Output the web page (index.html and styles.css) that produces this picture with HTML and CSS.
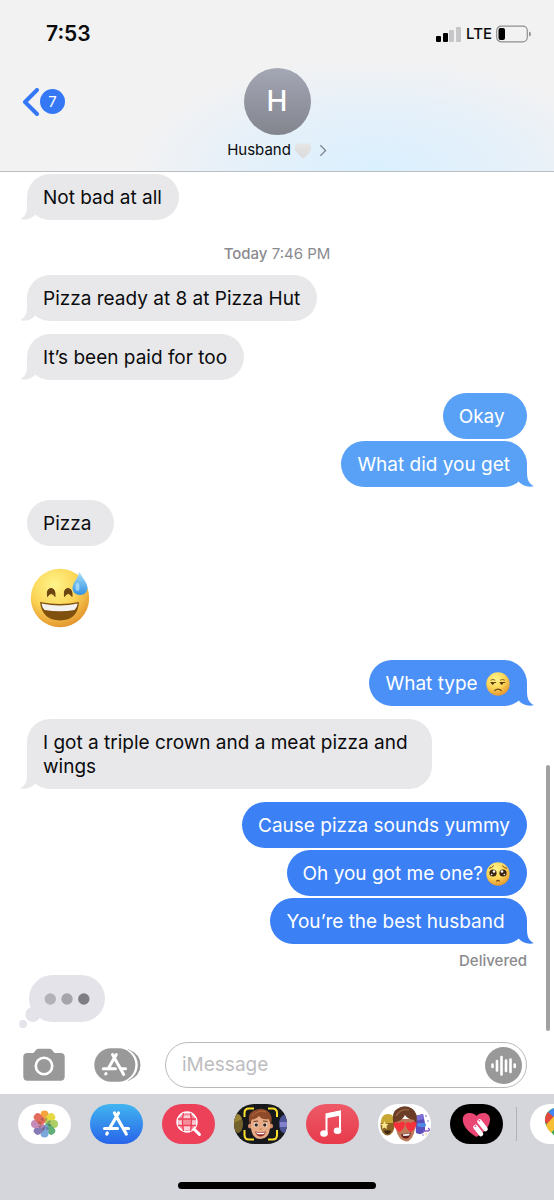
FILE: index.html
```html
<!DOCTYPE html>
<html lang="en">
<head>
    <meta charset="utf-8">
    <meta name="viewport" content="width=device-width, initial-scale=1">
    <title>Messages</title>
    <link rel="stylesheet" href="styles.css">
</head>
<body>
    <header class="header">
        <div class="status">
            <span class="time">7:53</span>
            <div class="signal">
                <svg width="26" height="16" viewBox="0 0 26 16" aria-label="Signal">
                    <rect x="0" y="10" width="5" height="6" rx="1"/>
                    <rect x="7" y="7" width="5" height="9" rx="1"/>
                    <rect x="13" y="4" width="5" height="12" rx="1" fill="#c6c6c8"/>
                    <rect x="20" y="1" width="5" height="15" rx="1" fill="#c6c6c8"/>
                </svg>
                <span class="network">LTE</span>
                <svg width="35" height="18" viewBox="0 0 35 18" aria-label="Battery">
                    <rect x="0.7" y="1.2" width="30.6" height="15.6" rx="4.5" fill="none" stroke="#8f8f92" stroke-width="1.2"/>
                    <rect x="2.5" y="3" width="6.5" height="12" rx="2"/>
                    <path d="M33 6.5 Q35 7 35 9 T33 11.5Z" fill="#8f8f92"/>
                </svg>
            </div>
        </div>
        <div class="contactBar">
            <button class="back" aria-label="Back, 7 unread">
                <svg width="17" height="28" viewBox="0 0 17 28">
                    <path d="M15 2 L3 14 L15 26" fill="none" stroke="#3478f6" stroke-width="4" stroke-linecap="round" stroke-linejoin="round"/>
                </svg>
                <span class="count">7</span>
            </button>
            <button class="contact">
                <span class="avatar">H</span>
                <span class="name">Husband
                    <svg width="18" height="17" viewBox="0 0 18 17">
                        <path d="M9 16.2 C4.5 13 .8 9.8 .8 5.6 C.8 2.8 2.7 1 5 1 C6.8 1 8.2 1.8 9 3 C9.8 1.8 11.2 1 13 1 C15.3 1 17.2 2.8 17.2 5.6 C17.2 9.8 13.5 13 9 16.2Z" fill="url(#heartFill)"/>
                    </svg>
                    <svg class="more" width="8" height="13" viewBox="0 0 8 13">
                        <path d="M1.3 1.2 L6.6 6.5 L1.3 11.8" fill="none" stroke="#7f868e" stroke-width="1.3"/>
                    </svg>
                </span>
            </button>
        </div>
    </header>

    <!-- Conversation -->
    <main class="chat">
        <div class="bubble in tail">Not bad at all</div>
        <p class="stamp"><b>Today</b> 7:46 PM</p>
        <div class="bubble in tail first">Pizza ready at 8 at Pizza Hut</div>
        <div class="bubble in tail">It’s been paid for too</div>
        <div class="bubble out light">Okay&nbsp;</div>
        <div class="bubble out light tail joined">What did you get</div>
        <div class="bubble in">Pizza&nbsp;</div>
        <div class="bigEmoji">
            <svg width="60" height="60" viewBox="0 0 60 60" role="img" aria-label="Grinning face with sweat">
                <circle cx="30" cy="30" r="29.2" fill="url(#face)"/>
                <path d="M17.5 28.5 Q16.5 20.5 21 20.5 Q25.5 20.5 25 28.5 Q21.2 22.5 17.5 28.5Z" fill="#6b4410" stroke="#6b4410" stroke-linejoin="round"/>
                <path d="M34.5 28.5 Q33.5 20.5 38 20.5 Q42.5 20.5 42 28.5 Q38.2 22.5 34.5 28.5Z" fill="#6b4410" stroke="#6b4410" stroke-linejoin="round"/>
                <path d="M10 34 Q30 38 49 34 Q48 52 30 52.5 Q12 52 10 34Z" fill="#80500f"/>
                <path d="M11.5 35.5 Q30 39.5 47.7 35.5 Q47 40 44.5 42 Q30 44.5 14.5 42 Q12 40 11.5 35.5Z" fill="#f3f2ef"/>
                <path d="M49.5 4 C53 11 57.5 15 57.5 20 C57.5 24.2 54 27 50 27 C45.5 27 42.5 24 42.5 20 C42.5 15 47.5 11 49.5 4Z" fill="url(#drop)"/>
                <ellipse cx="47.5" cy="19" rx="2" ry="4" fill="#c9efff" opacity=".6"/>
            </svg>
        </div>
        <div class="bubble out mid tail late">What type
            <svg class="emoji" width="24" height="24" viewBox="0 0 24 24" role="img" aria-label="Unamused face">
                <circle cx="12" cy="12" r="11.7" fill="url(#face)"/>
                <g fill="none" stroke="#6b4410" stroke-width="1.2" stroke-linecap="round">
                    <path d="M5 10.5 H9.8 M14 10.5 H18.8"/>
                    <path d="M5 8 Q7 6.8 9 8 M14.5 8 Q16.5 6.8 18.5 8" stroke-width=".8"/>
                    <path d="M8.8 18.5 Q12 15.8 15.2 18.5"/>
                </g>
                <path d="M5 10.8 H8.3 Q8 12.8 6.6 12.8 Q5.2 12.5 5 10.8Z M14 10.8 H17.3 Q17 12.8 15.6 12.8 Q14.2 12.5 14 10.8Z" fill="#4f3212"/>
            </svg>
        </div>
        <div class="bubble in tail">I got a triple crown and a meat pizza and wings</div>
        <div class="bubble out">Cause pizza sounds yummy</div>
        <div class="bubble out joined">Oh you got me one?<svg class="emoji" width="24" height="24" viewBox="0 0 24 24" role="img" aria-label="Pleading face">
                <circle cx="12" cy="12" r="11.7" fill="url(#face)"/>
                <circle cx="7" cy="11" r="3.6" fill="#3a2515"/>
                <circle cx="17" cy="11" r="3.6" fill="#3a2515"/>
                <g fill="#fff">
                    <circle cx="8" cy="9.5" r="1.3"/>
                    <circle cx="16" cy="9.5" r="1.3"/>
                    <circle cx="5.7" cy="12.5" r=".8"/>
                    <circle cx="18.3" cy="12.5" r=".8"/>
                </g>
                <g fill="none" stroke="#7a4a10" stroke-linecap="round">
                    <path d="M3.5 6.3 Q6 5.8 7.5 4 M20.5 6.3 Q18 5.8 16.5 4"/>
                    <path d="M10.7 19 Q12 17.7 13.3 19" stroke-width="1.3"/>
                </g>
            </svg></div>
        <div class="bubble out tail joined">You’re the best husband&nbsp;</div>
        <p class="delivered">Delivered</p>
        <svg class="typing" width="87" height="54" viewBox="0 0 87 54" role="img" aria-label="Typing">
            <g fill="#e4e3e9">
                <rect x="10" y="0" width="76" height="47" rx="23.5"/>
                <circle cx="14" cy="39.5" r="7.6"/>
                <circle cx="4" cy="49" r="4"/>
            </g>
            <circle cx="31.3" cy="24" r="5.7" fill="#b3b2b8"/>
            <circle cx="48" cy="24" r="5.7" fill="#a5a4aa"/>
            <circle cx="64.8" cy="24" r="5.7" fill="#7e7d83"/>
        </svg>
        <div class="scrollThumb"></div>
    </main>

    <form class="composer">
        <button type="button" aria-label="Camera">
            <svg width="42" height="34" viewBox="0 0 42 34">
                <path d="M4.5 5 H10.5 L13 2 Q14 .8 15.5 .8 H26.5 Q28 .8 29 2 L31.5 5 H37.5 Q41.7 5 41.7 9 V28.5 Q41.7 32.7 37.5 32.7 H4.5 Q.3 32.7 .3 28.5 V9 Q.3 5 4.5 5Z" fill="#999"/>
                <circle cx="21" cy="18" r="8.2" fill="none" stroke="#fff" stroke-width="2.6"/>
            </svg>
        </button>
        <button type="button" aria-label="Apps">
            <svg width="47" height="34" viewBox="0 0 47 34">
                <path d="M34 1 Q46.5 6 46.5 17 T34 33Z" fill="#999"/>
                <rect x=".3" y="0" width="43.5" height="34" rx="17" fill="#fff"/>
                <rect x=".3" y=".3" width="41" height="33.4" rx="16.7" fill="#999"/>
                <path d="M18.5 6.5 L29.7 26.5 M22.3 6.5 L14 21 M9.3 20.8 H21.5 M27 20.8 H31.5 M12 25.5 L11.7 26" fill="none" stroke="#fff" stroke-width="3" stroke-linecap="round"/>
            </svg>
        </button>
        <div class="field">
            <input type="text" placeholder="iMessage" aria-label="iMessage">
            <button type="button" aria-label="Record audio">
                <svg width="37" height="37" viewBox="0 0 37 37">
                    <circle cx="18.5" cy="18.5" r="18.5" fill="#999"/>
                    <path d="M7.5 17.5 V20 M12 14 V23.5 M16.5 10 V27.5 M21 13.5 V24 M25.5 12.5 V25 M29.7 17.5 V20" stroke="#fff" stroke-width="2.6" stroke-linecap="round"/>
                </svg>
            </button>
        </div>
    </form>

    <footer class="tray">
        <nav class="apps">
            <button aria-label="Photos">
                <svg viewBox="0 0 53 40">
                    <rect width="53" height="40" fill="#fff"/>
                    <g opacity=".9">
                        <rect x="22.5" y="6.5" width="8" height="13" rx="4" fill="#f39a2b"/>
                        <rect x="22.5" y="6.5" width="8" height="13" rx="4" fill="#e3d530" transform="rotate(45 26.5 20)"/>
                        <rect x="22.5" y="6.5" width="8" height="13" rx="4" fill="#a5cb55" transform="rotate(90 26.5 20)"/>
                        <rect x="22.5" y="6.5" width="8" height="13" rx="4" fill="#4fa66a" transform="rotate(135 26.5 20)"/>
                        <rect x="22.5" y="6.5" width="8" height="13" rx="4" fill="#6c9fd6" transform="rotate(180 26.5 20)"/>
                        <rect x="22.5" y="6.5" width="8" height="13" rx="4" fill="#7b6bae" transform="rotate(225 26.5 20)"/>
                        <rect x="22.5" y="6.5" width="8" height="13" rx="4" fill="#c07fae" transform="rotate(270 26.5 20)"/>
                        <rect x="22.5" y="6.5" width="8" height="13" rx="4" fill="#e25c4d" transform="rotate(315 26.5 20)"/>
                    </g>
                    <circle cx="26.5" cy="20" r="5" fill="none" stroke="#4a4238" stroke-width="3" stroke-dasharray="2 1.93" opacity=".35"/>
                    <circle cx="26.5" cy="20" r="1" fill="#fff"/>
                </svg>
            </button>
            <button aria-label="App Store">
                <svg viewBox="0 0 53 40">
                    <rect width="53" height="40" fill="url(#store)"/>
                    <path d="M24.5 9 L36.3 30 M28.5 9 L19.5 24.5 M14.5 24.5 H27.5 M33.5 24.5 H38.5 M17.3 29 L16.8 30" fill="none" stroke="#fff" stroke-width="3.2" stroke-linecap="round"/>
                </svg>
            </button>
            <button aria-label="Images">
                <svg viewBox="0 0 53 40">
                    <rect width="53" height="40" fill="#ed4059"/>
                    <circle cx="25" cy="18" r="9.8" fill="#f58c9a" stroke="#fff" stroke-width="1.8"/>
                    <path d="M21 11.5 H28 V15 H21Z M16.5 16.5 H21 V21 H16.5Z M29 16.5 H33.5 V21 H29Z M22 22 H28 V26 H22Z" fill="#fcd0d6"/>
                    <path d="M21.5 9 Q19.5 18 21.5 27 M28.5 9 Q30.5 18 28.5 27 M16 15 H34 M16 21.5 H34" fill="none" stroke="#ed4059" stroke-width="1.3"/>
                    <path d="M32.5 25.5 L37.5 30.5" stroke="#fff" stroke-width="3" stroke-linecap="round"/>
                </svg>
            </button>
            <button aria-label="Memoji">
                <svg viewBox="0 0 53 40">
                    <rect width="53" height="40" fill="#17181b"/>
                    <ellipse cx="4" cy="20" rx="5" ry="9" fill="#75612b"/>
                    <path d="M0 12 Q5 7 8 15 L0 19Z" fill="#988337"/>
                    <ellipse cx="50" cy="20" rx="5" ry="9" fill="#4d5496"/>
                    <rect x="46" y="18" width="7" height="5" fill="#8380cc"/>
                    <path d="M10.5 13 V9 Q10.5 4.5 15 4.5 H20 M34 4.5 H38.5 Q43 4.5 43 9 V13 M43 26 V31 Q43 35.5 38.5 35.5 H34 M20 35.5 H15 Q10.5 35.5 10.5 31 V26" fill="none" stroke="#f9e12d" stroke-width="2"/>
                    <circle cx="16.5" cy="22" r="2.5" fill="#d58f6b"/>
                    <circle cx="36.5" cy="22" r="2.5" fill="#d58f6b"/>
                    <path d="M17 17 Q17 10 26.5 10 T36 17 V24 Q35 35 26.5 35 T17 24Z" fill="#e7ab86"/>
                    <path d="M15.5 20 Q13 9 20 6.5 Q27 3 33 6.5 Q39.5 11 37 20 L34.5 15 Q28 16 25 12 Q22 15.5 18 15.5Z" fill="#8e4a2a"/>
                    <path d="M18 12 Q25 5 32 8" stroke="#b86b3f" fill="none"/>
                    <circle cx="22" cy="21" r="2.2" fill="#fff"/>
                    <circle cx="31" cy="21" r="2.2" fill="#fff"/>
                    <circle cx="22.2" cy="21" r="1.7" fill="#35231a"/>
                    <circle cx="30.8" cy="21" r="1.7" fill="#35231a"/>
                    <path d="M19.5 17.5 L24 17 M29 17 L33.5 17.5" stroke="#63331f"/>
                    <path d="M25.5 25 H28" stroke="#bd7758"/>
                    <path d="M21 27.5 Q26.5 29 32 27.5 Q30.5 32.5 26.5 32.5 T21 27.5Z" fill="#8b2a25"/>
                    <path d="M22 28.2 Q26.5 29.3 31 28.2 L30 30 Q26.5 30.7 23 30Z" fill="#fff"/>
                </svg>
            </button>
            <button aria-label="Music">
                <svg viewBox="0 0 53 40">
                    <rect width="53" height="40" fill="url(#music)"/>
                    <path d="M20.5 29 V10.2 L34 7.5 V26" fill="none" stroke="#fff" stroke-width="2"/>
                    <path d="M20.5 9.5 L35 6.8 V11.5 L20.5 14.3Z" fill="#fff"/>
                    <ellipse cx="18" cy="29.5" rx="3.8" ry="3.2" fill="#fff"/>
                    <ellipse cx="31.5" cy="26.8" rx="3.8" ry="3.2" fill="#fff"/>
                </svg>
            </button>
            <button aria-label="Memoji stickers">
                <svg viewBox="0 0 53 40">
                    <rect width="53" height="40" fill="#fff"/>
                    <ellipse cx="9.5" cy="21.5" rx="7" ry="10" fill="#8a6424"/>
                    <path d="M2.8 19 Q3 10 10 10 T17 19Z" fill="#c9a735"/>
                    <path d="M6.5 17 L7.7 19.7 L10.5 20 L8.5 22 L9 25 L6.5 23.5 L4 25 L4.5 22 L2.5 20 L5.3 19.7Z" fill="#fbe88e"/>
                    <path d="M6 26.5 H13 Q12 30 9.5 30 T6 26.5Z" fill="#3f2513"/>
                    <path d="M37 12 L45 10 L47 19 V27 Q44 32 38 29Z" fill="#5a4ebc"/>
                    <path d="M37 12 L45 10 L46 15 L37 17Z" fill="#7a70d7"/>
                    <rect x="39" y="19" width="9" height="4" rx="2" fill="#4f8ae0"/>
                    <path d="M45 27 H50 Q53 26 50 24" fill="none" stroke="#8b5cc9" stroke-width="1.5"/>
                    <g fill="#6554c8">
                        <circle cx="48" cy="12" r=".8"/>
                        <circle cx="50" cy="17" r=".7"/>
                        <circle cx="45" cy="31" r=".7"/>
                    </g>
                    <circle cx="48" cy="30" r=".8" fill="#f0b13a"/>
                    <path d="M18 15 H37 V25 Q35 37 28 37.5 Q20 36 18 25Z" fill="#bd7a5b"/>
                    <path d="M15.5 20 Q13 8 19 5 Q26 0 34 4.5 Q41 9 38 21 L36 16 Q29 15 27 11 Q24 17 17.5 18Z" fill="#6b3d27"/>
                    <path d="M18 12 Q23 4 31 6" fill="none" stroke="#93603f" stroke-width="1.5"/>
                    <path d="M22 28 C18 26 15 22 15.5 19.5 Q17.5 16.5 21 19.2 Q24.5 15.8 27 19 Q27.5 23.5 22 28Z" fill="#f5323b"/>
                    <path d="M33 28 C29 26 27 22 27.5 19.5 Q30 16.5 32.5 19.2 Q36 15.8 38.5 19 Q39 23.5 33 28Z" fill="#f5323b"/>
                    <path d="M23 30 Q28 30 33 28.5 Q32 34.5 28 34.5 T23 30Z" fill="#641d1c"/>
                    <path d="M24.5 30.5 L32 29.5 L31 31.5 L25.5 32Z" fill="#fff"/>
                </svg>
            </button>
            <button aria-label="Digital Touch">
                <svg viewBox="0 0 53 40">
                    <rect width="53" height="40"/>
                    <path d="M26.5 33 C18 28 12.8 22 12.8 15.5 C12.8 11.5 15.5 9 19.5 9 C22.5 9 25 10 26.5 12 C28 10 30.5 9 33.5 9 C37.5 9 40 11.5 40 15.5 C40 22 35 28 26.5 33Z" fill="#e94674"/>
                    <path d="M25.5 23 L31 30 M29.5 17.5 L35.5 25" stroke="#fff" stroke-width="4.6" stroke-linecap="round"/>
                    <path d="M24.6 22.8 L26 21.7 M28.7 17.3 L30 16.3" stroke="#e94674" stroke-width="1.2"/>
                </svg>
            </button>
            <span class="divider"></span>
            <button aria-label="Google Maps">
                <svg viewBox="0 0 53 40">
                    <rect width="53" height="40" fill="#fff"/>
                    <path d="M15 17 C15 9 20 4 27 4 C34 4 39 9 39 17 C39 25 30 28 27 37 C24 28 15 25 15 17Z" fill="#34a853"/>
                    <path d="M18 9 Q21 4 27 4 Q33 4 36 9 L25 16Z" fill="#4285f4"/>
                    <path d="M15 18 Q14.5 12 18 8 L25 14 L18 21Z" fill="#e2473c"/>
                    <path d="M16 21 L24 12 L31 18 L21 29 Q17 25 16 21Z" fill="#f7bf35"/>
                </svg>
            </button>
        </nav>
        <div class="homeBar"></div>
    </footer>

    <!-- Shared gradients -->
    <svg class="defs" width="0" height="0" aria-hidden="true">
        <defs>
            <radialGradient id="face" cx=".4" cy=".28" r=".75">
                <stop offset="0" stop-color="#fff58b"/>
                <stop offset=".55" stop-color="#fbd455"/>
                <stop offset="1" stop-color="#e3932d"/>
            </radialGradient>
            <linearGradient id="drop" x2="0" y2="1">
                <stop offset="0" stop-color="#a8def8"/>
                <stop offset="1" stop-color="#3293e4"/>
            </linearGradient>
            <linearGradient id="heartFill" x2="0" y2="1">
                <stop offset="0" stop-color="#e6e6e6"/>
                <stop offset="1" stop-color="#dadadb"/>
            </linearGradient>
            <linearGradient id="store" x2="0" y2="1">
                <stop offset="0" stop-color="#41b5f0"/>
                <stop offset="1" stop-color="#2864e9"/>
            </linearGradient>
            <linearGradient id="music" x2="0" y2="1">
                <stop offset="0" stop-color="#ee5a69"/>
                <stop offset="1" stop-color="#e73a4a"/>
            </linearGradient>
        </defs>
    </svg>
</body>
</html>
```
FILE: styles.css
```css
* {
    box-sizing: border-box;
}

body {
    margin: 0;
    min-height: 100vh;
    display: flex;
    flex-direction: column;
    background-color: white;
    color: #0b0b0d;
    font: 19px/24px Inter, "Liberation Sans", sans-serif;
    overflow-x: hidden;
}

button {
    padding: 0;
    border: 0;
    background: none;
    color: inherit;
    font: inherit;
    cursor: pointer;
}

svg {
    display: block;
    flex: none;
}

p {
    margin: 0;
}

/* Header */

.header {
    padding-bottom: 11px;
    border-bottom: 1px solid #b9bec3;
    background: radial-gradient(ellipse 44% 65% at 68% 100%, #daf0fe 0%, #e4f0fa 50%, rgba(242, 242, 243, 0) 100%), #f2f2f3;
}

.status {
    height: 68px;
    padding: 0 23px 0 46px;
    display: flex;
    align-items: center;
    justify-content: space-between;
}

.time {
    font-size: 21px;
    font-weight: 600;
}

.signal {
    display: flex;
    align-items: center;
    gap: 4px;
}

.network {
    font-size: 15px;
    font-weight: 500;
}

.contactBar {
    display: grid;
    grid-template-columns: 1fr auto 1fr;
    align-items: start;
}

.back {
    height: 67px;
    margin-left: 22px;
    display: flex;
    align-items: center;
    gap: 1px;
    justify-self: start;
}

.count {
    width: 25px;
    height: 25px;
    border-radius: 50%;
    background-color: #3478f6;
    color: white;
    font-size: 15px;
    line-height: 25px;
}

.contact {
    display: flex;
    flex-direction: column;
    align-items: center;
    gap: 5px;
}

.avatar {
    width: 67px;
    height: 67px;
    border-radius: 50%;
    background: linear-gradient(#a4a7b4, #82848e);
    color: white;
    font-size: 28px;
    font-weight: 500;
    line-height: 67px;
}

.name {
    display: flex;
    align-items: center;
    gap: 3px;
    font-size: 15px;
    line-height: 20px;
}

.more {
    margin-left: 4px;
}

/* Conversation */

.chat {
    position: relative;
    flex: 1;
    padding: 2px 27px 13px;
    display: flex;
    flex-direction: column;
    align-items: flex-start;
}

.bubble {
    position: relative;
    max-width: 81%;
    margin-top: 13px;
    padding: 12px 17px 10px 16px;
    border-radius: 23px;
}

.bubble:first-child,
.bubble.first {
    margin-top: 0;
}

.bubble.joined {
    margin-top: 2px;
}

.bubble.late {
    margin-top: 32px;
}

.in {
    background-color: #e8e8ea;
}

.out {
    align-self: flex-end;
    background-color: #3b80f5;
    color: white;
}

.out.light {
    background-color: #58a1f6;
}

.out.mid {
    background-color: #4a90f6;
}

.tail::before {
    content: "";
    position: absolute;
    bottom: 0;
    left: -7px;
    width: 16px;
    height: 23px;
    background-color: inherit;
    clip-path: path("M7 0 V8 C7 16 5 20 0 22 C6 24 12 21 15 18 L16 0 Z");
}

.out.tail::before {
    left: auto;
    right: -7px;
    transform: scaleX(-1);
}

.emoji {
    display: inline-block;
    margin-left: 3px;
    vertical-align: top;
}

.stamp,
.delivered {
    color: #8a8a8e;
    font-size: 15px;
    line-height: 18px;
}

.stamp {
    align-self: center;
    margin: 25px 0 12px;
}

.stamp b,
.delivered {
    font-weight: 500;
}

.bigEmoji {
    margin: 22px 0 0 3px;
}

.delivered {
    align-self: flex-end;
    margin-top: 8px;
}

.typing {
    margin: 5px 0 0 -8px;
}

.scrollThumb {
    position: absolute;
    right: 4px;
    bottom: 11px;
    width: 4px;
    height: 266px;
    border-radius: 2px;
    background-color: #a1a1a1;
}

/* Message box */

.composer {
    padding: 0 27px 6px 23px;
    display: flex;
    align-items: center;
}

.composer > button:first-child {
    margin-right: 29px;
}

.field {
    flex: 1;
    min-width: 0;
    height: 46px;
    margin-left: 24px;
    padding: 0 4px 0 16px;
    display: flex;
    align-items: center;
    border: 1px solid #b9b9bb;
    border-radius: 23px;
}

.field input {
    flex: 1;
    min-width: 0;
    padding: 0;
    border: 0;
    outline: 0;
    background: none;
    font: inherit;
}

.field input::placeholder {
    color: #bdbdc0;
}

/* App tray */

.tray {
    height: 106px;
    padding: 10px 0 11px 18px;
    display: flex;
    flex-direction: column;
    justify-content: space-between;
    background-color: #d4d6dc;
    overflow: hidden;
}

.apps {
    display: flex;
    align-items: center;
    gap: 19px;
}

.apps button {
    flex: none;
    width: 53px;
    height: 40px;
    border-radius: 20px;
    overflow: hidden;
}

.divider {
    flex: none;
    width: 1px;
    height: 34px;
    margin: 0 -6px;
    background-color: #b0b2b8;
}

.homeBar {
    align-self: center;
    width: 198px;
    height: 7px;
    margin-right: 18px;
    border-radius: 4px;
    background-color: black;
}

.defs {
    position: absolute;
}
```
